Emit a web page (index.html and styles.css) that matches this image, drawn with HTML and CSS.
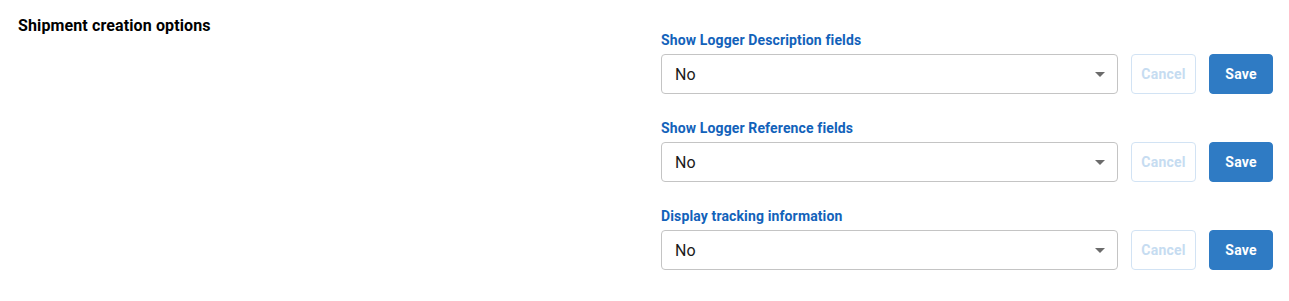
FILE: index.html
```html
<!DOCTYPE html>
<html>
<head>
<meta charset="utf-8">
<link rel="stylesheet" href="styles.css">
</head>
<body>
<div class="page">
  <h2 class="title">Shipment creation options</h2>
  <div class="options">
    <div class="field">
      <label class="label">Show Logger Description fields</label>
      <div class="row">
        <div class="select"><span>No</span><span class="caret"></span></div>
        <button class="btn cancel">Cancel</button>
        <button class="btn save">Save</button>
      </div>
    </div>
    <div class="field">
      <label class="label">Show Logger Reference fields</label>
      <div class="row">
        <div class="select"><span>No</span><span class="caret"></span></div>
        <button class="btn cancel">Cancel</button>
        <button class="btn save">Save</button>
      </div>
    </div>
    <div class="field">
      <label class="label">Display tracking information</label>
      <div class="row">
        <div class="select"><span>No</span><span class="caret"></span></div>
        <button class="btn cancel">Cancel</button>
        <button class="btn save">Save</button>
      </div>
    </div>
  </div>
</div>
</body>
</html>
```
FILE: styles.css
```css
html, body { margin: 0; padding: 0; background: #fff; }
body { font-family: Roboto, "Liberation Sans", sans-serif; color: #000; }
.page {
  display: grid;
  grid-template-columns: 643px 612px;
  padding: 16px 0 0 18px;
}
.title {
  margin: 0;
  font-size: 16px;
  font-weight: 700;
  line-height: 20px;
  letter-spacing: 0.12px;
}
.options { padding-top: 16px; display: flex; flex-direction: column; gap: 26px; }
.field { display: flex; flex-direction: column; gap: 6px; }
.label {
  font-size: 14px;
  font-weight: 700;
  color: #1262ba;
  line-height: 16px;
  letter-spacing: 0.13px;
}
.row { display: flex; gap: 13px; align-items: stretch; }
.select {
  box-sizing: border-box;
  width: 457px;
  height: 40px;
  border: 1px solid #c4c4c4;
  border-radius: 4px;
  display: flex;
  align-items: center;
  justify-content: space-between;
  padding: 0 12px 0 13px;
  font-size: 16px;
  color: #1a1a1a;
}
.caret {
  width: 0; height: 0;
  border-left: 5px solid transparent;
  border-right: 5px solid transparent;
  border-top: 5px solid #6b6b6b;
}
.btn {
  box-sizing: border-box;
  height: 40px;
  border-radius: 4px;
  font-family: Roboto, "Liberation Sans", sans-serif;
  font-size: 14px;
  font-weight: 700;
  padding: 0;
  letter-spacing: 0.2px;
}
.cancel {
  width: 65px;
  background: #fff;
  border: 1px solid #d2e3f4;
  color: #c6dcf1;
}
.save {
  width: 64px;
  background: #2f7bc4;
  border: 1px solid #2f7bc4;
  color: #fff;
}
```
